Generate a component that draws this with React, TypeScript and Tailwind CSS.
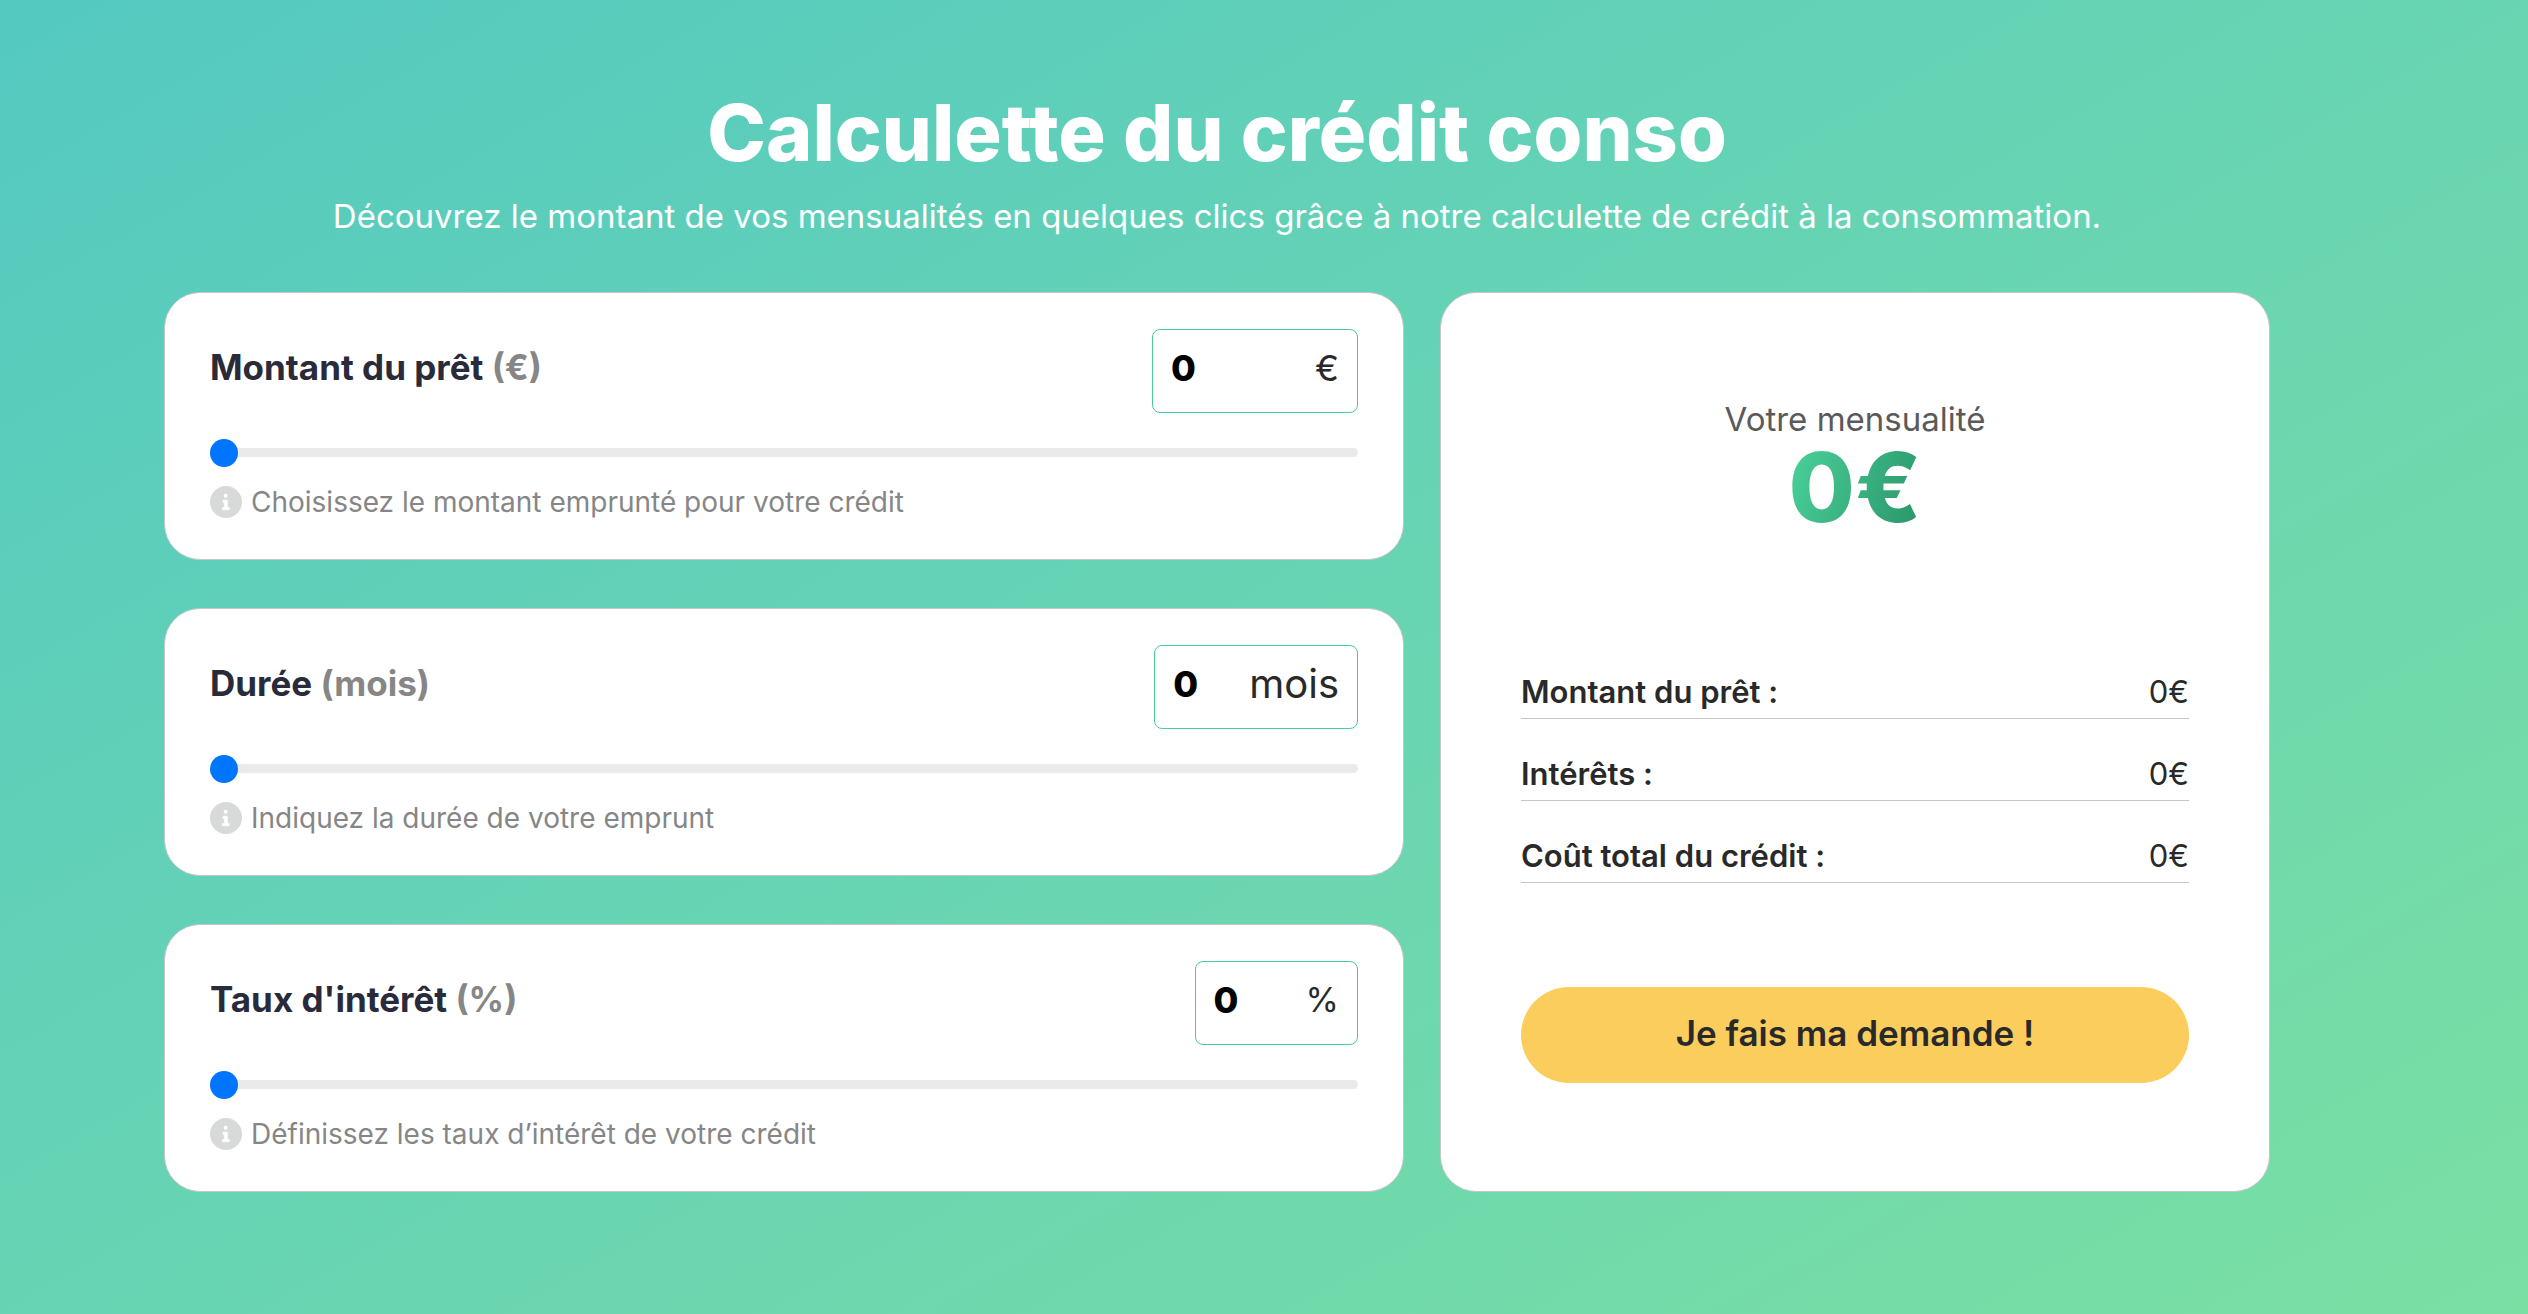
import { useState } from 'react';

type Field = {
  id: string;
  label: string;
  unit: string;
  hint: string;
  max: number;
  inputClass: string;
  unitClass: string;
};

const fields: Field[] = [
  {
    id: 'amount',
    label: 'Montant du prêt',
    unit: '€',
    hint: 'Choisissez le montant emprunté pour votre crédit',
    max: 75000,
    inputClass: 'w-36',
    unitClass: 'text-[36px]'
  },
  {
    id: 'duration',
    label: 'Durée',
    unit: 'mois',
    hint: 'Indiquez la durée de votre emprunt',
    max: 84,
    inputClass: 'w-[76px]',
    unitClass: 'text-[40px]'
  },
  {
    id: 'rate',
    label: "Taux d'intérêt",
    unit: '%',
    hint: 'Définissez les taux d’intérêt de votre crédit',
    max: 20,
    inputClass: 'w-[92px]',
    unitClass: 'text-[34px]'
  }
];

function InfoIcon() {
  return (
    <svg viewBox="0 0 32 32" className="size-8 shrink-0" aria-hidden="true">
      <circle cx="16" cy="16" r="16" fill="#d8dad9" />
      <circle cx="15.6" cy="9.8" r="2" fill="#fff" />
      <path d="M13 14.2h4.4v7.2h1.8v2.4h-6.8v-2.4h2v-4.8H13z" fill="#fff" stroke="#fff" strokeWidth="0.6" strokeLinejoin="round" />
    </svg>
  );
}

type FieldCardProps = {
  field: Field;
  value: number;
  onChange: (value: number) => void;
};

function FieldCard({ field, value, onChange }: FieldCardProps) {
  return (
    <div className="rounded-[36px] border border-[#c6c6c6] bg-white px-[45px] pt-9 pb-[39px]">
      <div className="flex items-start justify-between">
        <label htmlFor={field.id} className="pt-4 text-[35px] leading-11 font-bold text-[#292a3a]">
          {field.label} <span className="text-[#868686]">({field.unit})</span>
        </label>
        <div className="flex h-21 items-start rounded-lg border border-[#4acb98] px-[18px] pt-4">
          <input
            id={field.id}
            type="text"
            inputMode="numeric"
            className={`${field.inputClass} h-11 bg-transparent text-[36px] leading-11 font-extrabold text-black outline-none`}
            value={value}
            onChange={(e) => onChange(Number(e.target.value) || 0)}
          />
          <span className={`${field.unitClass} leading-11 text-[#292929]`}>{field.unit}</span>
        </div>
      </div>
      <input
        type="range"
        aria-label={field.label}
        min={0}
        max={field.max}
        value={value}
        onChange={(e) => onChange(Number(e.target.value))}
        className="mt-[35px] block h-[9px] w-full appearance-none rounded-full bg-[#eaeaea] [&::-webkit-slider-thumb]:size-7 [&::-webkit-slider-thumb]:appearance-none [&::-webkit-slider-thumb]:rounded-full [&::-webkit-slider-thumb]:bg-[#0075ff]"
      />
      <div className="mt-[27px] flex items-center gap-[9px] text-[28px] leading-9 text-[#868686]">
        <InfoIcon />
        {field.hint}
      </div>
    </div>
  );
}

export default function App() {
  const [values, setValues] = useState<Record<string, number>>({ amount: 0, duration: 0, rate: 0 });

  const { amount, duration, rate } = values;
  const monthlyRate = rate / 1200;
  let monthly = 0;
  if (duration > 0) {
    monthly = monthlyRate > 0 ? (amount * monthlyRate) / (1 - Math.pow(1 + monthlyRate, -duration)) : amount / duration;
  }
  const interest = duration > 0 ? monthly * duration - amount : 0;

  const summary = [
    { label: 'Montant du prêt :', value: amount },
    { label: 'Intérêts :', value: interest },
    { label: 'Coût total du crédit :', value: amount + interest }
  ];

  return (
    <main className="min-h-screen bg-linear-150 from-[#54c9c0] to-[#7adfa3] pt-24 pr-[258px] pb-30 pl-[164px] font-['Inter','Liberation_Sans',sans-serif]">
      <header className="text-center text-white">
        <h1 className="text-[79px] leading-18 font-extrabold">Calculette du crédit conso</h1>
        <p className="mt-6 text-[33px] leading-12">
          Découvrez le montant de vos mensualités en quelques clics grâce à notre calculette de crédit à la consommation.
        </p>
      </header>

      <div className="mt-13 grid grid-cols-[1240fr_830fr] gap-9">
        <div className="flex flex-col gap-12">
          {fields.map((field) => (
            <FieldCard
              key={field.id}
              field={field}
              value={values[field.id]}
              onChange={(value) => setValues((v) => ({ ...v, [field.id]: value }))}
            />
          ))}
        </div>

        <section className="flex flex-col rounded-[36px] border border-[#c6c6c6] bg-white px-20 pt-26 pb-27">
          <div className="flex flex-col items-center">
            <div className="text-[33px] leading-11 text-[#5a5a5a]">Votre mensualité</div>
            <div className="mt-1 bg-linear-110 from-[#4ad29c] to-[#2a9568] bg-clip-text text-[96px] leading-21 font-extrabold text-transparent">
              {Math.round(monthly)}€
            </div>
          </div>
          <dl className="mt-auto flex flex-col gap-[31px] text-[31px] leading-12 text-[#292929]">
            {summary.map((row) => (
              <div key={row.label} className="flex justify-between border-b border-[#c6c6c6] pb-[2px]">
                <dt className="font-semibold">{row.label}</dt>
                <dd>{Math.round(row.value)}€</dd>
              </div>
            ))}
          </dl>
          <button type="button" className="mt-26 h-24 rounded-full bg-[#fbcd5d] pb-1 text-[35px] font-semibold text-[#292929]">
            Je fais ma demande !
          </button>
        </section>
      </div>
    </main>
  );
}
